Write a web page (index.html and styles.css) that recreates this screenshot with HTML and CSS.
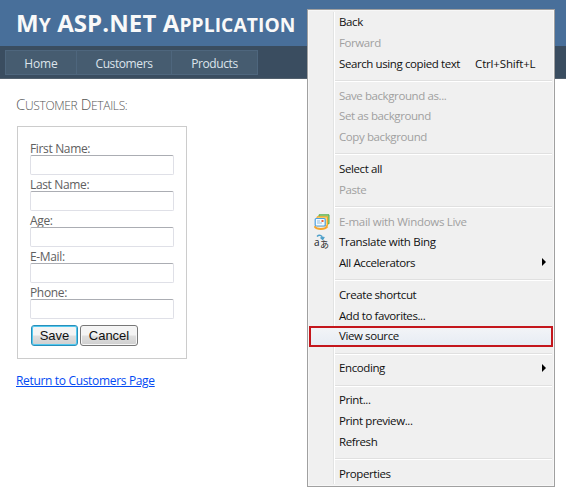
FILE: index.html
```html
<!DOCTYPE html>
<html lang="en">
<head>
<meta charset="utf-8">
<title>My ASP.NET Application</title>
<link rel="stylesheet" href="styles.css">
</head>
<body>
<header class="header">
  <h1 class="title">M<span class="sc">y</span> ASP.NET A<span class="sc">pplication</span></h1>
</header>
<nav class="nav">
  <a class="tab home">Home</a><a class="tab customers">Customers</a><a class="tab products">Products</a>
</nav>
<main class="main">
  <h2 class="subtitle">C<span class="sc">ustomer</span> D<span class="sc">etails:</span></h2>
  <form class="form">
    <label class="field"><span>First Name:</span><input type="text"></label>
    <label class="field"><span>Last Name:</span><input type="text"></label>
    <label class="field"><span>Age:</span><input type="text"></label>
    <label class="field"><span>E-Mail:</span><input type="text"></label>
    <label class="field"><span>Phone:</span><input type="text"></label>
    <div class="buttons"><button type="button" class="btn save">Save</button><button type="button" class="btn cancel">Cancel</button></div>
  </form>
  <a class="return" href="#">Return to Customers Page</a>
</main>
<div class="menu">
  <div class="group">
    <div class="item"><span>Back</span></div>
    <div class="item off"><span>Forward</span></div>
    <div class="item"><span>Search using copied text</span><span class="key">Ctrl+Shift+L</span></div>
  </div>
  <div class="group">
    <div class="item off"><span>Save background as...</span></div>
    <div class="item off"><span>Set as background</span></div>
    <div class="item off"><span>Copy background</span></div>
  </div>
  <div class="group">
    <div class="item"><span>Select all</span></div>
    <div class="item off"><span>Paste</span></div>
  </div>
  <div class="group">
    <div class="item off wide">
      <svg class="icon" viewBox="0 0 16 16"><path d="M5 .8h10v9H5z" fill="#9bd083" stroke="#57ad49"/><path d="M3 2.800h10.500v9H3z" fill="#ffd778" stroke="#efa62c"/><rect x="1.200" y="4.500" width="10" height="7.500" rx="1" fill="#f3faff" stroke="#4da1e2" stroke-width="1.200"/><path d="M3 7h3M3 9h5" stroke="#8dbde3"/><path d="M7.500 6h2v2h-2z" fill="#ed6336"/><path d="M.5 12.200c2 3.500 10 3.800 13 .2" fill="none" stroke="#f5a52d" stroke-width="2"/></svg>
      <span>E-mail with Windows Live</span></div>
    <div class="item wide">
      <span class="icon translate"><svg viewBox="0 0 16 16"><path d="M3 2.500C5 .5 8 1 8.500 4M6.500 3.500l2.200 2 1.500-2.600" fill="none" stroke="#4d9fc9" stroke-width="1.400"/></svg><span class="latin">a</span><span class="kana">あ</span></span>
      <span>Translate with Bing</span></div>
    <div class="item more"><span>All Accelerators</span></div>
  </div>
  <div class="group">
    <div class="item"><span>Create shortcut</span></div>
    <div class="item"><span>Add to favorites...</span></div>
    <div class="item chosen"><span>View source</span></div>
  </div>
  <div class="group">
    <div class="item more"><span>Encoding</span></div>
  </div>
  <div class="group">
    <div class="item"><span>Print...</span></div>
    <div class="item"><span>Print preview...</span></div>
    <div class="item"><span>Refresh</span></div>
  </div>
  <div class="group">
    <div class="item"><span>Properties</span></div>
  </div>
</div>
</body>
</html>
```
FILE: styles.css
```css
* { box-sizing: border-box; }
body {
  margin: 0;
  height: 493px;
  overflow: hidden;
  position: relative;
  background: #fff;
  font-family: "Open Sans", "Noto Sans", sans-serif;
  font-size: 12px;
}
.header { height: 46px; padding: 5px 0 0 16px; background: #486f9a; }
.title { margin: 0; font-size: 24px; line-height: 36px; font-weight: 700; color: #f9f9f9; white-space: nowrap; letter-spacing: .1px; }
.sc { font-size: .8em; text-transform: uppercase; }
.nav { height: 33px; padding: 4px 0 0 5px; display: flex; background: #3a4d60; border-bottom: 1px solid #52606d; }
.tab { height: 25px; border: 1px solid #4e667d; background: #465c70; color: #dde4ec; text-align: center; line-height: 25px; font-size: 12px; letter-spacing: -.4px; }
.tab + .tab { border-left: 0; }
.home { width: 72px; letter-spacing: -.1px; }
.customers { width: 95px; }
.products { width: 86px; }
.main { padding: 15px 16px; color: #606060; }
.subtitle { margin: 0; font-size: 15px; line-height: 20px; font-weight: 300; letter-spacing: -.35px; color: #555; }
.form { width: 170px; height: 233px; margin: 10px 0 0 1px; border: 1px solid #ccc; padding: 13px 12px; }
.field { display: flex; flex-direction: column; height: 36px; }
.field span { height: 15px; line-height: 17px; font-size: 12px; letter-spacing: -.35px; }
.field input { width: 144px; height: 20px; border: 1px solid #dfe0e7; border-top-color: #abadb3; border-radius: 2px; background: #fff; padding: 0 3px; outline: 0; }
.buttons { display: flex; gap: 2px; padding: 5px 0 0 1px; }
.btn { height: 21px; padding: 0; border: 1px solid #777; border-radius: 3px; background: linear-gradient(#f4f4f4 0 48%, #dfdfdf 52%, #cfcfcf); box-shadow: inset 0 0 0 1px #f6f6f6; font: 13px/18px "Liberation Sans", sans-serif; color: #111; }
.save { width: 47px; border-color: #288fba; box-shadow: inset 0 0 0 1px #52c8ef; }
.cancel { width: 58px; }
.return { display: inline-block; margin-top: 13px; color: #034af3; line-height: 18px; letter-spacing: -.33px; }
.menu {
  position: absolute;
  left: 307px;
  top: 9px;
  width: 248px;
  height: 478px;
  padding: 2px 1px;
  border: 1px solid #a0a0a0;
  background: linear-gradient(90deg, transparent 25px, #e2e3e3 25px 26px, #fff 26px 27px, transparent 27px) 0 2px / 100% 472px no-repeat #f0f0f0;
  box-shadow: inset 0 0 0 1px #f7f7f7;
  color: #111;
}
.group + .group { padding-top: 11.3px; background: linear-gradient(#e0e0e0 0 1px, #fff 1px 2px) 26px 6px / 217px 2px no-repeat; }
.item { position: relative; display: flex; align-items: center; height: 20.68px; padding: 0 0 1px 30px; white-space: nowrap; font-size: 11.5px; letter-spacing: -.4px; }
.wide { letter-spacing: -.3px; }
.off { color: #a0a0a0; }
.key { margin-left: 15px; letter-spacing: -.16px; }
.more::after { content: ""; margin-left: auto; margin-right: 7px; border-left: 4px solid #000; border-top: 4px solid transparent; border-bottom: 4px solid transparent; }
.chosen { border: 2px solid #c4161c; padding-left: 28px; background: linear-gradient(#f2f4f7, #e7ecf4); }
.icon { position: absolute; left: 5px; top: 3px; width: 16px; height: 16px; }
.translate svg { position: absolute; left: 0; top: -1px; width: 16px; height: 16px; }
.latin, .kana { position: absolute; line-height: 12px; color: #222; }
.latin { left: 0; top: 1px; font-size: 10px; }
.kana { left: 6px; top: 4px; font: 9px/11px "Noto Sans CJK JP", sans-serif; }
```
